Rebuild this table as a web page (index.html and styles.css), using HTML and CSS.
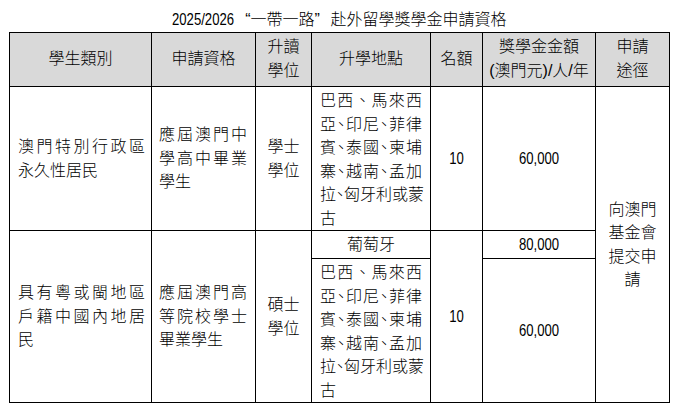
FILE: index.html
```html
<!DOCTYPE html>
<html lang="zh-Hant">
<head>
<meta charset="utf-8">
<title>2025/2026“一帶一路”赴外留學獎學金申請資格</title>
<link rel="stylesheet" href="styles.css">
</head>
<body>
<div class="page">
  <h1 class="title"><span class="narrow lead">2025/2026</span><span class="q-open">“</span>一帶一路<span class="q-close">”</span>赴外留學獎學金申請資格</h1>
  <div class="sheet">
    <div class="cell head">學生類別</div>
    <div class="cell head">申請資格</div>
    <div class="cell head">升讀<br>學位</div>
    <div class="cell head">升學地點</div>
    <div class="cell head">名額</div>
    <div class="cell head">獎學金金額<br>(澳門元)/人/年</div>
    <div class="cell head">申請<br>途徑</div>

    <div class="cell who">澳門特別行政區永久性居民</div>
    <div class="cell qual">應屆澳門中學高中畢業學生</div>
    <div class="cell degree">學士學位</div>
    <div class="cell place">
      <span class="ln">巴西、馬來西</span>
      <span class="ln tight">亞、印尼、菲律</span>
      <span class="ln tight">賓、泰國、柬埔</span>
      <span class="ln tight">寨、越南、孟加</span>
      <span class="ln tight">拉、匈牙利或蒙</span>
      <span class="ln last">古</span>
    </div>
    <div class="cell num"><span class="narrow">10</span></div>
    <div class="cell num"><span class="narrow">60,000</span></div>
    <div class="cell route">向澳門基金會提交申請</div>

    <div class="cell who span2">具有粵或閩地區戶籍中國內地居民</div>
    <div class="cell qual span2">應屆澳門高等院校學士畢業學生</div>
    <div class="cell degree span2">碩士學位</div>
    <div class="cell center">葡萄牙</div>
    <div class="cell num span2"><span class="narrow">10</span></div>
    <div class="cell num"><span class="narrow">80,000</span></div>
    <div class="cell place">
      <span class="ln">巴西、馬來西</span>
      <span class="ln tight">亞、印尼、菲律</span>
      <span class="ln tight">賓、泰國、柬埔</span>
      <span class="ln tight">寨、越南、孟加</span>
      <span class="ln tight">拉、匈牙利或蒙</span>
      <span class="ln last">古</span>
    </div>
    <div class="cell num"><span class="narrow">60,000</span></div>
  </div>
</div>
</body>
</html>
```

FILE: styles.css
```css
html, body {
  margin: 0;
  padding: 0;
  background: #ffffff;
}

body {
  font-family: "Liberation Sans", "Noto Sans CJK TC", sans-serif;
  font-size: 16px;
  font-weight: 300;
  color: #000000;
}

.page {
  padding: 8px 0 0 9px;
  width: 661px;
}

.title {
  margin: 0;
  font-size: 16px;
  font-weight: 300;
  line-height: 24px;
  text-align: center;
}

.narrow {
  display: inline-block;
  transform: scaleX(0.82);
}

.title .narrow.lead {
  transform-origin: left center;
  margin-right: -13.5px;
}

.q-open,
.q-close {
  display: inline-block;
  width: 1em;
}

.q-open {
  text-align: right;
}

.q-close {
  text-align: left;
}

.sheet {
  display: grid;
  grid-template-columns: 141px 103px 55px 118px 51px 112px 73px;
  grid-template-rows: 53px 143px 27px 143px;
  gap: 1px;
  padding: 1px;
  background: #000000;
  width: 661px;
  box-sizing: border-box;
}

.cell {
  background: #ffffff;
  display: flex;
  flex-direction: column;
  justify-content: center;
  line-height: 23.5px;
  min-width: 0;
}

.head {
  background: #d9d9d9;
  text-align: center;
  padding-bottom: 2px;
}

.who {
  padding: 0 6px 0 8px;
  text-align: justify;
}

.qual {
  padding: 0 8px 0 7px;
  text-align: justify;
}

.degree {
  padding: 0 5px;
  text-align: center;
}

.place {
  padding: 2px 8px 0 8px;
}

.ln {
  display: block;
  white-space: nowrap;
  text-align: justify;
  text-align-last: justify;
}

.ln.tight {
  font-feature-settings: "halt";
}

.ln.last {
  text-align-last: left;
}

.num,
.center {
  text-align: center;
}

.route {
  grid-row: span 3;
  padding: 0 6px;
  text-align: center;
}

.span2 {
  grid-row: span 2;
}
```
